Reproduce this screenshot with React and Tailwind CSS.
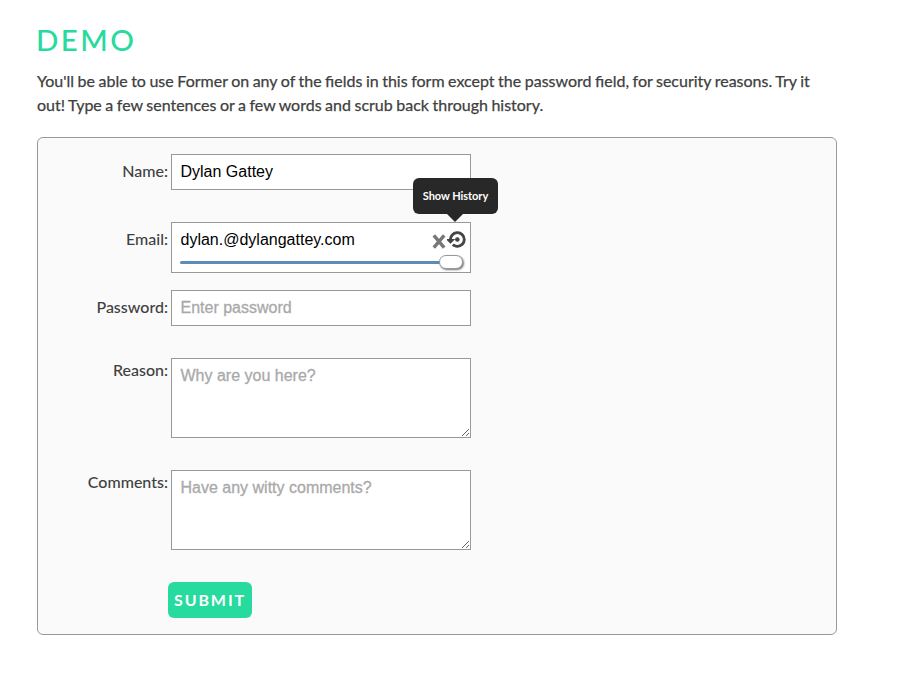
const control =
  "block w-[300px] border border-[#999] bg-white pr-2 pl-[8.5px] font-['Liberation_Sans',sans-serif] text-base leading-[34px] text-black outline-none placeholder:text-[#a9a9a9] placeholder:opacity-100 placeholder:[-webkit-text-stroke:0.3px_#a9a9a9]";

function Row({ label, top, children }) {
  return (
    <div className="flex items-start">
      <label className={`${top ? 'pt-0' : 'pt-[5px]'} w-[130px] shrink-0 text-right text-base leading-6`}>{label}</label>
      <div className="ml-[3px]">{children}</div>
    </div>
  );
}

function TextBox({ placeholder }) {
  return (
    <div className="relative">
      <textarea className={`${control} h-20 resize-none overflow-hidden py-0`} placeholder={placeholder} />
      <svg className="absolute right-0.5 bottom-0.5 h-[7px] w-[7px]" viewBox="0 0 7 7" stroke="#555" strokeWidth="0.9" fill="none">
        <path d="M0 7L7 0M4 7L7 4" />
      </svg>
    </div>
  );
}

function EmailField() {
  return (
    <div className="relative h-9">
      <div className="h-[51px] w-[300px] border border-[#999] bg-white">
        <div className="flex h-[34px] items-center pr-1 pl-[8.5px]">
          <input
            className="w-[251.5px] bg-transparent font-['Liberation_Sans',sans-serif] text-base text-black outline-none"
            defaultValue="dylan.@dylangattey.com"
          />
          <svg className="mt-[2px] h-[15px] w-[14px] shrink-0" viewBox="0 0 14 15" stroke="#777" strokeWidth="3.4" fill="none">
            <path d="M1.8 1.4L12.2 13.6M12.2 1.4L1.8 13.6" />
          </svg>
          <svg className="-mt-px ml-px h-[17px] w-[19px] shrink-0" viewBox="0 2 22 20" fill="#444" stroke="#444" strokeWidth="1.3" preserveAspectRatio="none">
            <path d="M14 12c0-1.1-.9-2-2-2s-2 .9-2 2 .9 2 2 2 2-.9 2-2zm-2-9c-4.97 0-9 4.03-9 9H0l4 4 4-4H5c0-3.87 3.13-7 7-7s7 3.13 7 7-3.13 7-7 7c-1.51 0-2.91-.49-4.06-1.3l-1.42 1.44C8.04 20.3 9.94 21 12 21c4.97 0 9-4.03 9-9s-4.03-9-9-9z" />
          </svg>
        </div>
        <div className="-mt-[2px] ml-2 flex h-[14px] items-center">
          <div className="h-[3px] w-[260px] rounded-l-sm bg-[#5b8db8]" />
          <div className="-ml-px h-[14px] w-6 rounded-full border border-[#999] bg-white shadow-[1px_1px_2px_rgba(0,0,0,0.55)]" />
        </div>
      </div>
      <div className="absolute -top-11 left-[242px] flex h-9 w-[85px] items-center justify-center rounded-md bg-[#282828] text-[11px] font-bold tracking-[-0.05px] text-white">
        Show History
        <div className="absolute top-full left-[34px] border-x-8 border-t-8 border-x-transparent border-t-[#282828]" />
      </div>
    </div>
  );
}

export default function App() {
  return (
    <main className="h-[684px] bg-white pt-6 pl-[37px] font-[Lato,sans-serif] font-medium text-[#404040]">
      <h1 className="-ml-px text-[29.5px] leading-8 font-medium tracking-[2.4px] text-[#27da9d]">DEMO</h1>
      <p className="mt-[13px] w-[800px] text-base leading-6 font-normal [word-spacing:-0.57px] [-webkit-text-stroke:0.25px_#404040]">
        You'll be able to use Former on any of the fields in this form except the password field, for security reasons. Try it<br />
        out! Type a few sentences or a few words and scrub back through history.
      </p>
      <form className="mt-5 flex h-[498px] w-[800px] flex-col gap-8 rounded-md border border-[#999] bg-[#fafafa] pt-4">
        <Row label="Name:"><input className={`${control} h-9`} defaultValue="Dylan Gattey" /></Row>
        <Row label="Email:"><EmailField /></Row>
        <Row label="Password:"><input className={`${control} h-9`} placeholder="Enter password" type="password" /></Row>
        <Row label="Reason:" top><TextBox placeholder="Why are you here?" /></Row>
        <Row label="Comments:" top><TextBox placeholder="Have any witty comments?" /></Row>
        <button type="button" className="ml-[130px] h-9 w-[84px] shrink-0 rounded-md bg-[#27da9d] text-base font-bold tracking-[1.9px] text-white">SUBMIT</button>
      </form>
    </main>
  );
}
